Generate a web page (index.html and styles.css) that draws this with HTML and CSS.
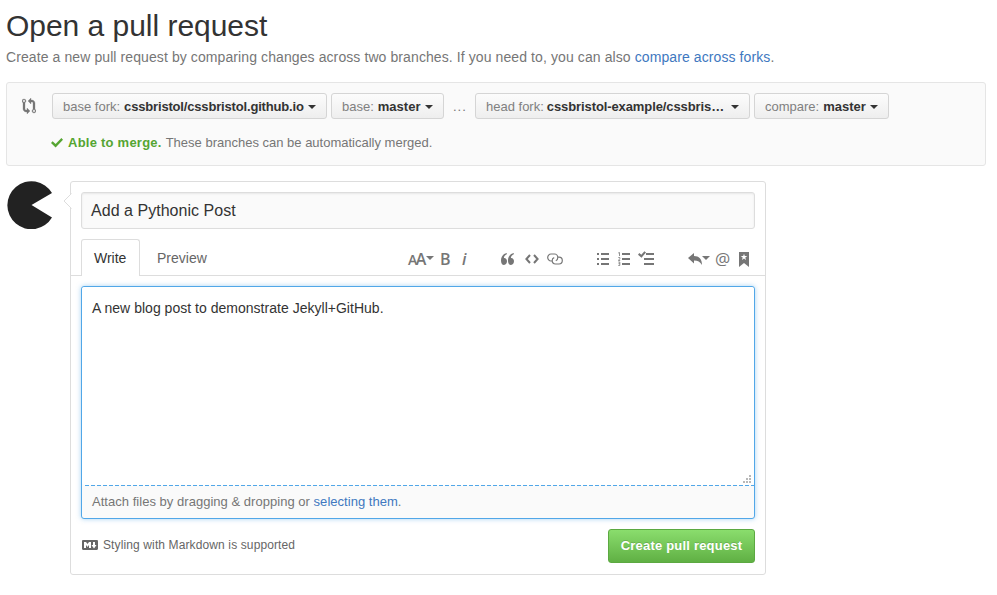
FILE: index.html
```
<!DOCTYPE html>
<html lang="en">
<head>
<meta charset="utf-8">
<title>Open a pull request</title>
<link rel="stylesheet" href="styles.css">
</head>
<body>
<main class="page">
  <h1 class="title">Open a pull request</h1>
  <p class="lead">Create a new pull request by comparing changes across two branches. If you need to, you can also <a href="#">compare across forks</a>.</p>

  <section class="range">
    <svg class="compare-icon" width="14" height="16" viewBox="0 0 14 16"><path d="M5 12H4c-.27-.02-.48-.11-.69-.31-.21-.2-.3-.42-.31-.69V4.72A1.993 1.993 0 0 0 2 1a1.993 1.993 0 0 0-1 3.72V11c.03.78.34 1.47.94 2.06.6.59 1.28.91 2.06.94h1v2l3-3-3-3v2zM2 1.8c.66 0 1.2.55 1.2 1.2 0 .65-.55 1.2-1.2 1.2C1.35 4.2.8 3.65.8 3c0-.65.55-1.2 1.2-1.2zm11 9.48V5c-.03-.78-.34-1.47-.94-2.06-.6-.59-1.28-.91-2.06-.94H9V0L6 3l3 3V4h1c.27.02.48.11.69.31.21.2.3.42.31.69v6.28A1.993 1.993 0 0 0 12 15a1.993 1.993 0 0 0 1-3.72zm-1 2.92c-.66 0-1.2-.55-1.2-1.2 0-.65.55-1.2 1.2-1.2.65 0 1.2.55 1.2 1.2 0 .65-.55 1.2-1.2 1.2z"/></svg>
    <div class="range-body">
      <div class="selectors">
        <button class="select base-fork"><span>base fork:</span><b>cssbristol/cssbristol.github.io</b><i class="caret"></i></button>
        <button class="select base"><span>base:</span><b>master</b><i class="caret"></i></button>
        <span class="dots">...</span>
        <button class="select head-fork"><span>head fork:</span><b>cssbristol-example/cssbris…</b><i class="caret"></i></button>
        <button class="select compare"><span>compare:</span><b>master</b><i class="caret"></i></button>
      </div>
      <p class="merge"><svg width="12" height="10" viewBox="0 0 12 10"><path d="M12 1.700 4.600 9.400 0 5l1.600-1.700 3 2.700L10.400 0z"/></svg><b>Able to merge.</b><span>These branches can be automatically merged.</span></p>
    </div>
  </section>

  <section class="compose">
    <svg class="avatar" width="48" height="48" viewBox="0 0 48 48"><path d="M45 12A24 24 0 1 0 45 36.500L24.500 24z"/></svg>
    <form class="card">
      <svg class="pointer" width="9" height="16" viewBox="0 0 9 16"><path d="M9 0v16L1 8z" class="pointer-fill"/><path d="M8.500 .5 1 8l7.500 7.500" class="pointer-line"/></svg>
      <div class="subject">Add a Pythonic Post</div>
      <div class="tabs">
        <span class="tab active">Write</span>
        <span class="tab">Preview</span>
        <div class="toolbar">
          <span class="tool text-size"><small>A</small>A</span><i class="caret"></i>
          <span class="tool bold">B</span>
          <span class="tool italic">i</span>
          <svg class="quote" width="13" height="12" viewBox="0 0 13 12"><path d="M5.800 0v1.300C4 2 3 3.300 2.900 5c1.800-.2 3.100 1.200 3.100 3.100C6 10.300 4.900 12 3 12 1 12 0 10.200 0 7.500 0 3.600 2.200.7 5.800 0zM12.800 0v1.300C11 2 10 3.300 9.900 5c1.800-.2 3.100 1.200 3.100 3.100 0 2.200-1.100 3.900-3 3.900-2 0-3-1.800-3-4.500C7 3.600 9.200.7 12.800 0z"/></svg>
          <svg class="code" width="14" height="10" viewBox="0 0 14 10"><path class="stroke" d="M5 1 1.400 5 5 9M9 1l3.600 4L9 9"/></svg>
          <svg class="link" width="16" height="12" viewBox="0 0 16 12"><path class="thin" d="M5.500 8H4C2.100 8 .7 6.300.7 4.500S2.100 1 4 1h3.500c1.900 0 3.300 1.700 3.300 3.500C10.800 6 10 7.200 8.800 7.700M10.500 4.200H12c1.900 0 3.300 1.600 3.300 3.400S13.900 11 12 11H8.500c-1.900 0-3.300-1.600-3.300-3.400C5.200 6.300 6 5 7.200 4.600"/></svg>
          <svg class="list" width="13" height="12" viewBox="0 0 13 12"><path d="M0 0h2v2H0zM4 0h8v2H4zM0 5h2v2H0zM4 5h8v2H4zM0 10h2v2H0zM4 10h8v2H4z"/></svg>
          <svg class="numbers" width="13" height="14" viewBox="0 0 13 14"><path d="M4 1h8v2H4zM4 6h8v2H4zM4 11h8v2H4z"/><path class="digit" d="M.2 1 1.500.5V4M.3 5.500h1.500v1.200L.4 8.500h1.800M.3 10h1.500v3.500H.3M.5 11.700h1.300"/></svg>
          <svg class="tasks" width="17" height="14" viewBox="0 0 17 14"><path d="M8 1h8v2H8zM6 6h10v2H6zM6 11h10v2H6zM8 .4 3.500 5.700 0 2.800l1.300-1.700 2 1.600L6.400-.8z"/></svg>
          <svg class="reply" width="14" height="12" viewBox="0 0 14 12"><path d="M6 0v3c5 0 8 3 8 9C12 8.800 10 7.400 6 7.400V10.500L0 5z"/></svg><i class="caret"></i>
          <span class="tool mention">@</span>
          <svg class="saved" width="10" height="15" viewBox="0 0 10 15"><path fill-rule="evenodd" d="M0 0h10v15L5 11 0 15zM5 1.700 4.200 4 1.700 4l2 1.500L3 8l2-1.500L7 8 6.300 5.500 8.300 4H5.800z"/></svg>
        </div>
      </div>
      <div class="editor">
        <div class="message">A new blog post to demonstrate Jekyll+GitHub.
          <svg class="grip" width="8" height="8" viewBox="0 0 8 8"><path d="M6 0h2v2H6zM3 3h2v2H3zM6 3h2v2H6zM0 6h2v2H0zM3 6h2v2H3zM6 6h2v2H6z"/></svg>
        </div>
        <svg class="dash" width="672" height="1"><path d="M3 .5h669"/></svg>
        <p class="attach">Attach files by dragging &amp; dropping or <a href="#">selecting them</a>.</p>
      </div>
      <div class="actions">
        <span class="markdown"><svg width="16" height="16" viewBox="0 0 16 16"><path d="M14.850 3H1.150C.52 3 0 3.520 0 4.150v7.690C0 12.480.52 13 1.150 13h13.690c.64 0 1.150-.52 1.150-1.150v-7.700C16 3.520 15.480 3 14.850 3zM9 11H7V8L5.500 9.920 4 8v3H2V5h2l1.500 2L7 5h2v6zm2.990.5L9.500 8H11V5h2v3h1.500l-2.510 3.500z"/></svg><span>Styling with Markdown is supported</span></span>
        <button class="create" type="button">Create pull request</button>
      </div>
    </form>
  </section>
</main>
</body>
</html>
```
FILE: styles.css
```
* { box-sizing: border-box; }
body { margin: 0; background: #fff; color: #333; font: 14px/20px "Liberation Sans", Arial, sans-serif; }
h1, p { margin: 0; }
a { color: #4078c0; text-decoration: none; }
svg { display: block; flex: none; fill: #767676; }
button { font: inherit; color: inherit; margin: 0; }
.page { width: 986px; padding: 6px 0 0 6px; }
.title { font-size: 30px; line-height: 40px; font-weight: 400; letter-spacing: -.03px; white-space: nowrap; }
.lead { margin-top: 1px; color: #767676; letter-spacing: .095px; white-space: nowrap; }
.range { display: flex; height: 84px; margin-top: 15px; padding: 10px 15px; border: 1px solid #e5e5e5; border-radius: 3px; background: #fafafa; font-size: 13px; }
.compare-icon { margin: 5px 16px 0 0; stroke: #767676; stroke-width: .3; }
.selectors { display: flex; height: 26px; }
.select { display: flex; align-items: center; height: 26px; padding: 1px 10px 0; border: 1px solid #d5d5d5; border-radius: 3px; background: linear-gradient(#fcfcfc, #eee); white-space: nowrap; }
.select span { color: #808080; margin-right: 4px; }
.select .caret { margin-left: auto; }
.caret { width: 0; height: 0; flex: none; border: 4px solid transparent; border-top-color: currentColor; border-bottom: 0; }
.base-fork { width: 275px; }
.base-fork b { letter-spacing: -.17px; }
.base { width: 113px; margin-left: 4px; }
.head-fork { width: 275px; }
.head-fork span { margin-right: 3px; }
.head-fork b { letter-spacing: -.1px; }
.compare { width: 135px; margin-left: 4px; }
.dots { width: 31px; padding-left: 9px; line-height: 28px; color: #767676; letter-spacing: 1px; }
.merge { display: flex; align-items: center; margin-top: 14px; color: #767676; white-space: nowrap; }
.merge svg { fill: #55a532; margin: 0 5px 0 -1px; }
.merge b { color: #55a532; margin-right: 4px; letter-spacing: .24px; }
.compose { display: flex; margin-top: 15px; }
.avatar { margin-left: 1px; fill: #222; }
.card { position: relative; width: 696px; height: 394px; margin-left: 15px; padding: 10px 0; border: 1px solid #ddd; border-radius: 3px; }
.pointer { position: absolute; left: -8px; top: 11px; }
.pointer-fill { fill: #fff; }
.pointer-line { fill: none; stroke: #ddd; }
.subject { height: 37px; margin: 0 10px; padding: 0 9px; border: 1px solid #ddd; border-radius: 3px; background: #fafafa; box-shadow: inset 0 1px 2px rgba(0,0,0,.075); font-size: 16px; line-height: 35px; letter-spacing: .03px; }
.tabs { display: flex; height: 37px; margin-top: 10px; padding-left: 10px; border-bottom: 1px solid #ddd; }
.tab { height: 37px; padding: 8px 12px; color: #666; border: 1px solid transparent; }
.tab.active { width: 59px; color: #333; border-color: #ddd; border-bottom: 0; border-radius: 3px 3px 0 0; background: #fff; }
.tab + .tab { width: 76px; padding-left: 16px; }
.toolbar { display: flex; align-items: center; height: 40px; margin-left: 192px; color: #767676; }
.toolbar .caret { margin-top: -2px; }
.tool { font: 600 16px/20px "Open Sans", sans-serif; }
.text-size { width: 18px; letter-spacing: -1.4px; white-space: nowrap; }
.text-size small { font-size: 14px; }
.bold { width: 10px; margin-left: 6px; }
.italic { width: 7px; margin-left: 12px; font-style: italic; }
.quote { margin-left: 32px; }
.code { margin-left: 11px; }
.link { margin-left: 8px; }
.stroke { fill: none; stroke: #767676; stroke-width: 2; }
.thin { fill: none; stroke: #767676; stroke-width: 1.2; }
.list { margin-left: 34px; }
.numbers { margin-left: 8px; }
.digit { fill: none; stroke: #767676; stroke-width: .8; }
.tasks { margin-left: 7px; overflow: visible; }
.reply { margin-left: 33px; }
.mention { width: 16px; margin-left: 5px; font-weight: 400; font-size: 17px; }
.saved { margin-left: 8px; }
.editor { height: 233px; margin: 10px 10px 0; border: 1px solid #51a7e8; border-radius: 3px; background: #fafafa; box-shadow: 0 0 5px rgba(81,167,232,.5); }
.message { position: relative; height: 198px; padding: 11px 10px; border-radius: 3px; background: #fff; letter-spacing: .02px; }
.grip { position: absolute; right: 3px; bottom: 2px; fill: #b8b8b8; }
.dash path { stroke: #51a7e8; stroke-dasharray: 4 2; }
.attach { padding: 6px 10px; color: #767676; font-size: 13px; letter-spacing: .03px; white-space: nowrap; }
.actions { display: flex; justify-content: space-between; margin: 10px 10px 0 11px; }
.markdown { display: flex; align-items: center; height: 32px; color: #666; font-size: 12px; letter-spacing: .12px; white-space: nowrap; }
.markdown svg { margin-right: 5px; fill: #666; }
.create { width: 147px; height: 34px; padding: 0; border: 1px solid #5ca941; border-radius: 3px; background: linear-gradient(#8add6d, #60b044); color: #fff; font-size: 13px; font-weight: 700; letter-spacing: .2px; text-shadow: 0 -1px 0 rgba(0,0,0,.15); white-space: nowrap; }
```
